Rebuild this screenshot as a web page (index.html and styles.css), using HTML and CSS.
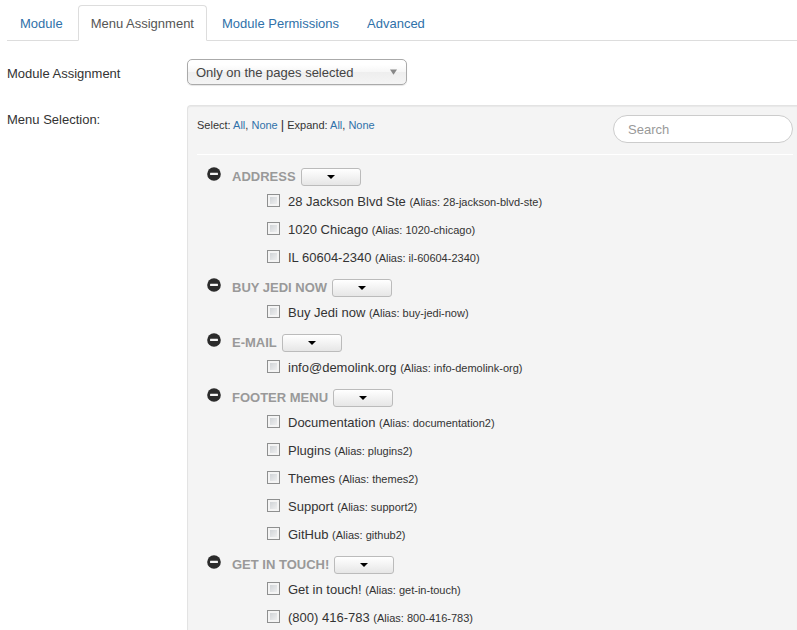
FILE: index.html
```html
<!DOCTYPE html>
<html lang="en">
<head>
<meta charset="utf-8">
<title>Module Manager</title>
<link rel="stylesheet" href="styles.css">
</head>
<body>
<svg class="defs" aria-hidden="true">
  <symbol id="minus" viewBox="0 0 14 14"><circle cx="7" cy="7" r="6.8" fill="#2b2b2b"/><rect x="3" y="5.8" width="8" height="2.2" rx=".4" fill="#f4f4f4"/></symbol>
  <symbol id="caret" viewBox="0 0 8 4"><path d="M0 0h8L4 4z" fill="#000"/></symbol>
</svg>
<nav class="tabs">
  <a class="tab" href="#module">Module</a>
  <a class="tab active" href="#assignment">Menu Assignment</a>
  <a class="tab" href="#permissions">Module Permissions</a>
  <a class="tab" href="#advanced">Advanced</a>
</nav>
<main class="form">
  <div class="control">
    <label class="label" for="assign">Module Assignment</label>
    <div class="chosen">
      <select id="assign"><option>Only on the pages selected</option></select>
      <svg class="arrow" viewBox="0 0 8 6" aria-hidden="true"><path d="M0 0h8L4 6z" fill="#888"/></svg>
    </div>
  </div>
  <div class="control grow">
    <span class="label">Menu Selection:</span>
    <section class="well">
      <div class="toolbar">
        <div class="links">Select: <a href="#all">All</a>, <a href="#none">None</a> <span class="bar">|</span> Expand: <a href="#expand">All</a>, <a href="#collapse">None</a></div>
        <input class="search" type="text" placeholder="Search" aria-label="Search">
      </div>
      <div class="tree">
        <div class="heading"><svg class="toggle"><use href="#minus"/></svg><h4>ADDRESS</h4><button class="drop" aria-label="Address options"><svg><use href="#caret"/></svg></button></div>
        <ul>
          <li><label><input type="checkbox">28 Jackson Blvd Ste <small>(Alias: 28-jackson-blvd-ste)</small></label></li>
          <li><label><input type="checkbox">1020 Chicago <small>(Alias: 1020-chicago)</small></label></li>
          <li><label><input type="checkbox">IL 60604-2340 <small>(Alias: il-60604-2340)</small></label></li>
        </ul>
        <div class="heading"><svg class="toggle"><use href="#minus"/></svg><h4>BUY JEDI NOW</h4><button class="drop" aria-label="Buy Jedi now options"><svg><use href="#caret"/></svg></button></div>
        <ul>
          <li><label><input type="checkbox">Buy Jedi now <small>(Alias: buy-jedi-now)</small></label></li>
        </ul>
        <div class="heading"><svg class="toggle"><use href="#minus"/></svg><h4>E-MAIL</h4><button class="drop" aria-label="E-mail options"><svg><use href="#caret"/></svg></button></div>
        <ul>
          <li><label><input type="checkbox">info@demolink.org <small>(Alias: info-demolink-org)</small></label></li>
        </ul>
        <div class="heading"><svg class="toggle"><use href="#minus"/></svg><h4>FOOTER MENU</h4><button class="drop" aria-label="Footer menu options"><svg><use href="#caret"/></svg></button></div>
        <ul>
          <li><label><input type="checkbox">Documentation <small>(Alias: documentation2)</small></label></li>
          <li><label><input type="checkbox">Plugins <small>(Alias: plugins2)</small></label></li>
          <li><label><input type="checkbox">Themes <small>(Alias: themes2)</small></label></li>
          <li><label><input type="checkbox">Support <small>(Alias: support2)</small></label></li>
          <li><label><input type="checkbox">GitHub <small>(Alias: github2)</small></label></li>
        </ul>
        <div class="heading"><svg class="toggle"><use href="#minus"/></svg><h4>GET IN TOUCH!</h4><button class="drop" aria-label="Get in touch options"><svg><use href="#caret"/></svg></button></div>
        <ul>
          <li><label><input type="checkbox">Get in touch! <small>(Alias: get-in-touch)</small></label></li>
          <li><label><input type="checkbox">(800) 416-783 <small>(Alias: 800-416-783)</small></label></li>
        </ul>
      </div>
    </section>
  </div>
</main>
</body>
</html>
```
FILE: styles.css
```css
* { box-sizing: border-box; }
body {
  margin: 0;
  padding: 5px 0 0 7px;
  min-height: 100vh;
  display: flex;
  flex-direction: column;
  background: #fff;
  color: #333;
  font: 13px/18px "Liberation Sans", Arial, sans-serif;
}
a { color: #3071a9; text-decoration: none; }
.defs { display: none; }

.tabs { display: flex; gap: 2px; border-bottom: 1px solid #ddd; }
.tab {
  padding: 9px 12px 7px;
  margin-bottom: -1px;
  border: 1px solid transparent;
  border-radius: 4px 4px 0 0;
}
.tab.active { color: #555; background: #fff; border-color: #ddd #ddd #fff; }

.form { flex: 1; display: flex; flex-direction: column; gap: 20px; padding-top: 18px; }
.control { display: flex; }
.grow { flex: 1; }
.label { width: 180px; flex: none; padding-top: 6px; }

.chosen { position: relative; width: 220px; height: 26px; }
.chosen select {
  appearance: none;
  width: 100%;
  height: 26px;
  padding: 2px 24px 0 8px;
  border: 1px solid #aaa;
  border-radius: 5px;
  background: linear-gradient(#fff 20%, #f6f6f6 50%, #eee 52%, #f4f4f4);
  box-shadow: 0 1px 1px rgba(0, 0, 0, .1);
  color: #444;
  font: inherit;
}
.arrow { position: absolute; right: 10px; top: 10px; width: 7px; height: 6px; pointer-events: none; }

.well {
  flex: 1;
  min-width: 0;
  padding: 9px 4px 0 9px;
  border: solid #e3e3e3;
  border-width: 1px 0 0 1px;
  border-radius: 4px 0 0 0;
  background: #f4f4f4;
  box-shadow: inset 0 1px 1px rgba(0, 0, 0, .05);
}
.toolbar {
  display: flex;
  justify-content: space-between;
  height: 40px;
  border-bottom: 1px solid #fff;
}
.links { padding-top: 1px; font-size: 11px; }
.bar { font-size: 13px; }
.search {
  width: 180px;
  height: 28px;
  padding: 0 14px;
  border: 1px solid #ccc;
  border-radius: 14px;
  background: #fff;
  color: #555;
  font: inherit;
}
.search::placeholder { color: #999; }

.tree { padding: 5px 0 0 10px; }
.heading { display: flex; align-items: flex-end; height: 27px; }
.toggle { width: 14px; height: 14px; margin: 0 11px 6px 0; }
h4 { margin: 0 5px 0 0; font-size: 13px; line-height: 20px; color: #999; }
.drop {
  display: flex;
  align-items: center;
  justify-content: center;
  width: 60px;
  height: 18px;
  margin-bottom: 1px;
  padding: 0;
  border: 1px solid #bbb;
  border-radius: 3px;
  background: linear-gradient(#fff, #e6e6e6);
}
.drop svg { width: 8px; height: 4px; }
ul { margin: 0; padding: 0 0 0 60px; list-style: none; }
li label { display: flex; align-items: center; height: 28px; padding-top: 2px; white-space: pre; }
li input {
  appearance: none;
  width: 13px;
  height: 13px;
  margin: 0 8px 4px 0;
  border: 1px solid #8e8f8f;
  background: linear-gradient(135deg, #c8ccd0, #f6f6f6);
  box-shadow: inset 0 0 0 2px #f4f4f4;
}
small { font-size: 11px; }
```
